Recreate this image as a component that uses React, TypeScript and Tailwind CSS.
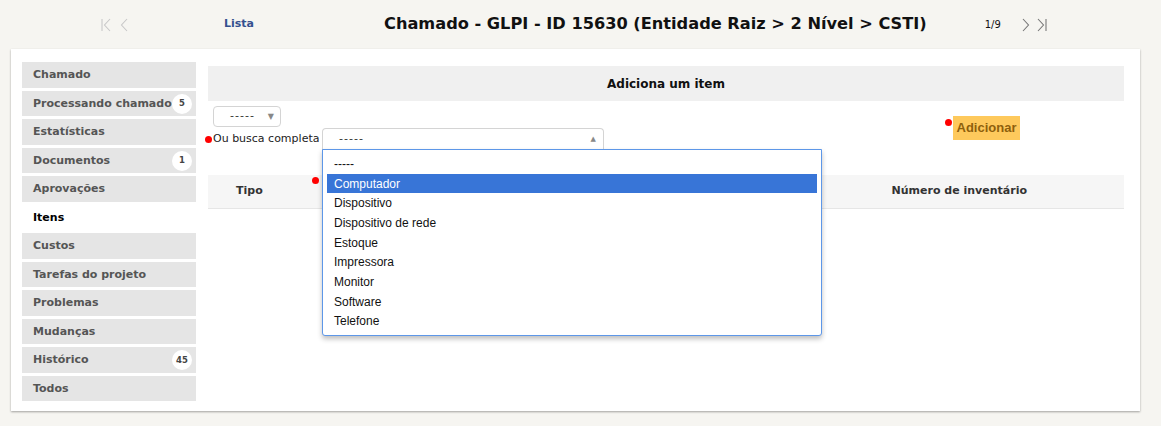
import React from "react";

const tabs: { label: string; badge?: string; active?: boolean }[] = [
  { label: "Chamado" },
  { label: "Processando chamado", badge: "5" },
  { label: "Estatísticas" },
  { label: "Documentos", badge: "1" },
  { label: "Aprovações" },
  { label: "Itens", active: true },
  { label: "Custos" },
  { label: "Tarefas do projeto" },
  { label: "Problemas" },
  { label: "Mudanças" },
  { label: "Histórico", badge: "45" },
  { label: "Todos" },
];

const options = [
  "-----",
  "Computador",
  "Dispositivo",
  "Dispositivo de rede",
  "Estoque",
  "Impressora",
  "Monitor",
  "Software",
  "Telefone",
];

function Chevron({ dir, bar, color }: { dir: "l" | "r"; bar?: boolean; color: string }) {
  return (
    <svg width="10" height="14" viewBox="0 0 10 14" fill="none" stroke={color} strokeWidth="1.1">
      {dir === "l" ? (
        <>
          {bar && <line x1="1" y1="1" x2="1" y2="13" />}
          <polyline points={bar ? "9,1 3.5,7 9,13" : "8,1 2.5,7 8,13"} />
        </>
      ) : (
        <>
          <polyline points={bar ? "1,1 6.5,7 1,13" : "2,1 7.5,7 2,13"} />
          {bar && <line x1="9" y1="1" x2="9" y2="13" />}
        </>
      )}
    </svg>
  );
}

function Dot() {
  return <span className="block w-[7px] h-[7px] rounded-full bg-[#f00]" />;
}

export default function App() {
  const verdana = { fontFamily: '"DejaVu Sans", Verdana, sans-serif' };
  return (
    <div className="w-[1161px] h-[426px] bg-[#f6f5f1] overflow-hidden" style={verdana}>
      {/* top navigation */}
      <div className="h-[49px] flex items-center">
        <div className="flex items-center gap-[8px] ml-[101px] mt-[1px]">
          <Chevron dir="l" bar color="#c8c8c8" />
          <Chevron dir="l" color="#c8c8c8" />
        </div>
        <div className="ml-[95px] text-[11px] font-bold text-[#34508f]">Lista</div>
        <div className="ml-[130px] text-[16.2px] font-bold text-[#111] whitespace-nowrap">
          Chamado - GLPI - ID 15630 (Entidade Raiz &gt; 2 Nível &gt; CSTI)
        </div>
        <div className="ml-[58px] text-[10px] text-[#111]">1/9</div>
        <div className="flex items-center gap-[6px] ml-[20px] mt-[1px]">
          <Chevron dir="r" color="#777" />
          <Chevron dir="r" bar color="#777" />
        </div>
      </div>

      {/* card */}
      <div className="ml-[11px] w-[1129px] h-[362px] bg-white shadow-[0_1px_2px_rgba(0,0,0,0.35)] flex pl-[11px] pt-[13px]">
        {/* sidebar */}
        <div className="w-[174px] flex flex-col gap-[3px]">
          {tabs.map((t) => (
            <div
              key={t.label}
              className={`h-[25.5px] flex items-center pl-[11px] pr-[4px] pt-[1px] text-[11px] font-bold whitespace-nowrap ${
                t.active ? "bg-white text-[#000]" : "bg-[#e5e5e5] text-[#555]"
              }`}
            >
              <span className="flex-1">{t.label}</span>
              {t.badge && (
                <span className="w-[20px] h-[20px] rounded-full bg-white flex items-center justify-center text-[8.5px] font-bold text-[#444]">
                  {t.badge}
                </span>
              )}
            </div>
          ))}
        </div>

        {/* content */}
        <div className="ml-[12px] w-[916px] pt-[4px] relative">
          <div className="h-[35px] bg-[#f0f0f0] flex items-center justify-center text-[12px] font-bold text-[#111]">
            Adiciona um item
          </div>

          <div className="relative h-[74px]">
            <div className="flex">
              <div className="ml-[5px] mt-[5px] w-[68px] h-[21px] border border-[#d4d4d4] rounded-[4px] flex items-center pl-[16px] pr-[6px] text-[11px] text-[#333]">
                <span className="flex-1 tracking-[1px]">-----</span>
                <span className="text-[8px] text-[#888]">▼</span>
              </div>
              <div className="ml-auto mr-[104px] mt-[15px] flex items-start">
                <span className="mt-[3px] mr-[1px]">
                  <Dot />
                </span>
                <div
                  className="w-[67px] h-[24px] bg-[#fec95c] flex items-center justify-center text-[13px] text-[#8e5f0c] font-bold"
                  style={{ fontFamily: '"Liberation Sans", Arial, sans-serif' }}
                >
                  Adicionar
                </div>
              </div>
            </div>
            <div className="absolute left-[-3px] top-[27px] flex items-center">
              <Dot />
              <span className="ml-[1px] w-[109px] text-[11px] text-[#222] whitespace-nowrap">Ou busca completa</span>
              <div className="w-[282px] h-[22px] border border-[#d4d4d4] border-b-[#aaa] rounded-t-[4px] flex items-center pl-[16px] pr-[7px] text-[11px] text-[#333]">
                <span className="flex-1 tracking-[1px]">-----</span>
                <span className="text-[7px] text-[#888]">▲</span>
              </div>
            </div>
          </div>

          <div className="h-[34px] bg-[#f6f6f6] border-b border-[#e6e6e6] flex items-center text-[11px] font-bold text-[#333] relative">
            <span className="ml-[28px]">Tipo</span>
            <span className="absolute left-[104px] top-[2px]">
              <Dot />
            </span>
            <span className="ml-auto mr-[97px]">Número de inventário</span>
          </div>

          {/* open dropdown */}
          <div
            className="absolute left-[114px] top-[87px] w-[500px] bg-white border border-[#5d97e8] rounded-b-[3px] shadow-[0_3px_5px_rgba(0,0,0,0.25)] px-[4px] pt-[4px] pb-[4px] text-[12px] text-[#111]"
            style={{ fontFamily: '"Liberation Sans", Arial, sans-serif' }}
          >
            {options.map((o, i) => (
              <div
                key={o}
                className={`h-[19.7px] flex items-center pl-[7px] ${i === 1 ? "bg-[#3875d7] text-white" : ""}`}
              >
                {o}
              </div>
            ))}
          </div>
        </div>
      </div>
    </div>
  );
}
